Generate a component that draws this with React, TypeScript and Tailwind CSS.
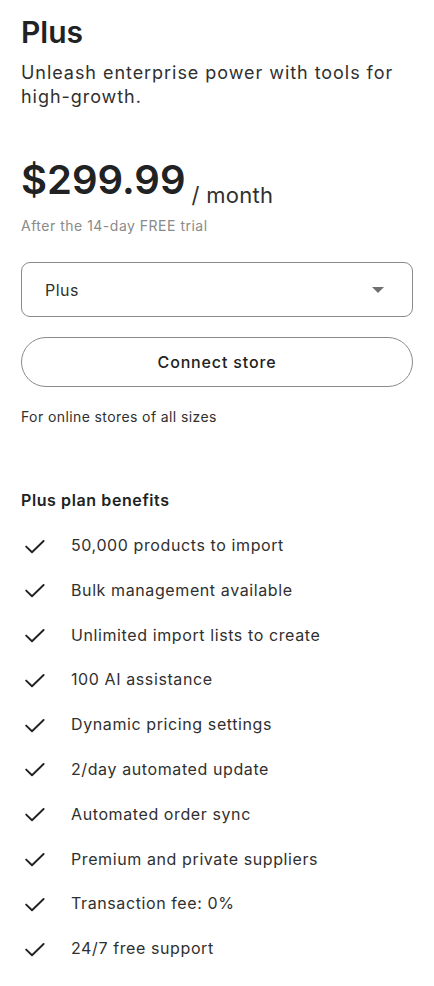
import React from 'react';

const benefits = [
  '50,000 products to import',
  'Bulk management available',
  'Unlimited import lists to create',
  '100 AI assistance',
  'Dynamic pricing settings',
  '2/day automated update',
  'Automated order sync',
  'Premium and private suppliers',
  'Transaction fee: 0%',
  '24/7 free support',
];

const CheckIcon = () => (
  <svg width="20" height="14" viewBox="0 0 20 14" fill="none" className="shrink-0">
    <path d="M1.2 6.6 L7 12.2 L18.6 1" stroke="#1f2124" strokeWidth="1.9" strokeLinecap="round" strokeLinejoin="round" />
  </svg>
);

export default function App() {
  return (
    <div
      className="min-h-screen w-full bg-white px-[21px] pt-[14px] text-[#202223]"
      style={{ fontFamily: 'Inter, "Noto Sans", sans-serif' }}
    >
      {/* Header */}
      <h1 className="text-[30px] leading-[36px] font-semibold">Plus</h1>
      <p className="mt-[11px] text-[18px] leading-[24px] tracking-[0.95px] text-[#303030]">
        Unleash enterprise power with tools for <span className="whitespace-nowrap">high-growth.</span>
      </p>

      {/* Price */}
      <div className="mt-[44px] flex items-end gap-[6px]">
        <span className="text-[40px] leading-[54px] font-semibold">$299.99</span>
        <span className="text-[22px] leading-[24px] tracking-[0.3px] text-[#303030]">/ month</span>
      </div>
      <p className="mt-[9px] text-[14px] leading-[20px] tracking-[0.5px] text-[#8a8a8a]">After the 14-day FREE trial</p>

      {/* Plan select */}
      <button className="mt-[26px] flex h-[55px] w-full items-center justify-between rounded-[9px] border border-[#8a8a8a] pl-[23px] pr-[28px] text-left">
        <span className="text-[16px] leading-[24px] tracking-[0.5px] text-[#303030]">Plus</span>
        <svg width="12" height="6" viewBox="0 0 12 6">
          <path d="M0 0 H12 L6 6 Z" fill="#707070" />
        </svg>
      </button>

      {/* Connect store */}
      <button className="mt-[20px] flex h-[50px] w-full items-center justify-center rounded-full border-[1.5px] border-[#8a8a8a] text-[16px] leading-[24px] font-medium tracking-[0.85px] text-[#202223]">
        Connect store
      </button>
      <p className="mt-[20px] text-[14px] leading-[20px] tracking-[0.4px] text-[#303030]">For online stores of all sizes</p>

      {/* Benefits */}
      <h2 className="mt-[61px] text-[16px] leading-[24px] font-semibold tracking-[0.6px]">Plus plan benefits</h2>
      <ul className="mt-[21px] flex flex-col gap-[20.8px]">
        {benefits.map((b) => (
          <li key={b} className="flex items-center">
            <span className="flex w-[50px] items-center pl-[4px] pt-[3px]">
              <CheckIcon />
            </span>
            <span className="text-[16px] leading-[24px] tracking-[0.6px] text-[#303030]">{b}</span>
          </li>
        ))}
      </ul>
    </div>
  );
}
